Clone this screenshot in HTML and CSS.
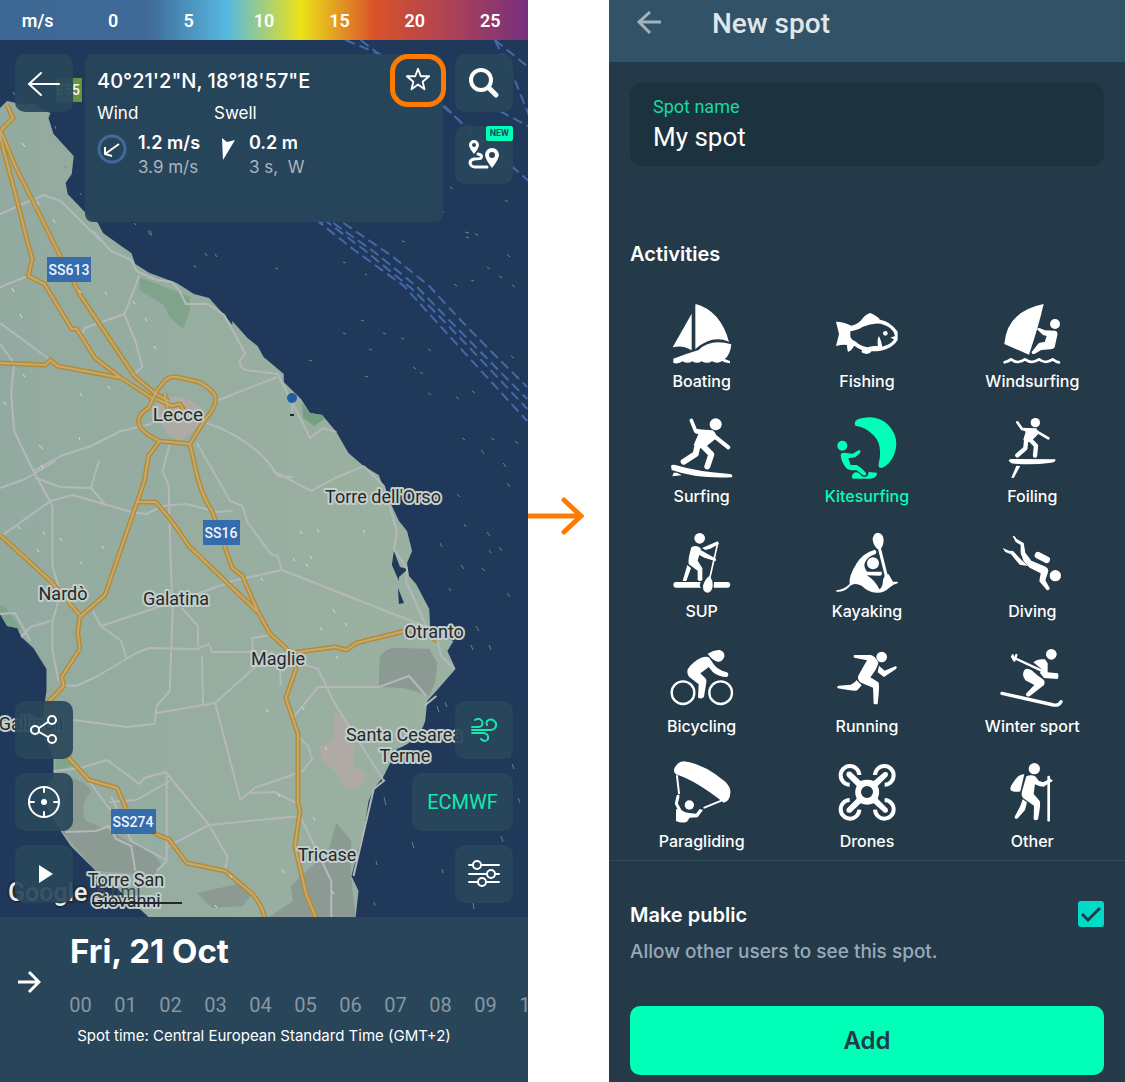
FILE: index.html
```
<!DOCTYPE html>
<html lang="en">
<head>
  <meta charset="UTF-8" />
  <title>New spot</title>
  <meta name="viewport" content="width=device-width, initial-scale=1.0" />
  <link rel="stylesheet" href="styles.css">
</head>
<body>
  <main class="page">

    <!-- Map screen -->
    <section class="screen map-screen">
      <div class="scale">
        <span>m/s</span><span>0</span><span>5</span><span>10</span><span>15</span><span>20</span><span>25</span>
      </div>

      <div class="map">
        <svg class="map-canvas" viewBox="0 40 528 877" preserveAspectRatio="xMidYMid slice" role="img" aria-label="Map of Salento">
          <defs>
            <linearGradient id="landFill" x1="0" x2="1">
              <stop offset="0" stop-color="#93aaa0" />
              <stop offset="1" stop-color="#9bb1a1" />
            </linearGradient>
            <path id="majorRoads" d="M7 104L13 117L2 128L0 135L17 200L27 240L32 258L28 275L44 283L71 328L76 328L94 357L120 377L152 398M2 133L15 165L40 215L57 250L80 295L133 375L153 392L167 400M0 362L45 364L50 359L57 365L120 377M163 380Q168 375 175 376L197 381Q210 388 213 395Q216 404 202 420L188 443L158 440Q138 431 137 420Q138 412 147 407L155 390ZM158 440L147 455L143 480L104 594L79 616L77 632L79 648L61 676L63 685L47 702Q40 725 68 757L88 779L116 787L125 808Q138 828 167 838L185 862L223 870L250 893Q260 905 262 917M188 443L193 465Q198 492 210 510L230 567L240 575L255 610L267 632L288 652L293 668L283 697L295 733L295 803L297 810L292 845L303 893L313 917M137 501H154Q165 512 187 545L255 611M288 652L332 646L343 649L353 642L405 629L420 632L433 640M0 534L50 580L79 614M155 398L170 405L178 403L184 412M163 392L166 408" />
          </defs>

          <rect x="0" y="40" width="528" height="877" fill="#20385a" />

          <g transform="translate(0 1) scale(1.01 1)">
            <!-- ferry lines -->
            <path class="ferry" d="M84 90Q190 110 310 218M90 100Q220 150 320 222M342 39L378 54M357 39L410 80L528 184M490 39L528 70M490 39L510 80L528 125M440 105L470 135M495 110L528 128M312 218L352 250L400 285Q440 330 522 420M320 218L362 250L408 288Q450 330 522 408M330 222L372 252L412 285Q450 325 522 398M340 222L388 255L425 285Q460 325 522 386" />

            <!-- land -->
            <path fill="url(#landFill)" d="M0 107L7 100L25 104L33 102L40 108L50 112L48 117L53 133L73 155L71 173L65 182L67 193L83 210L97 222L102 232L120 245L130 252L134 263L148 272L175 282L192 293L207 297L222 314L230 324V320L245 337L255 345L261 356L281 373V381L298 398L307 412L319 414L333 431L345 452L360 465L375 474L381 490L395 520L403 530L408 550L403 562L405 575L412 583L425 608L426 630L449 640L443 650L451 668L432 690L423 700L421 720Q415 740 393 748L380 775L370 788L365 800L360 830L348 875L355 890L352 917H148L130 900L95 870L70 845L60 830L40 795L53 775V757L40 730L46 690V668L33 647L21 636L17 627L7 625L0 613Z" />
            <path fill="#20385a" d="M390 550L396 566L404 568L395 576V580L388 564ZM394 587L400 602L395 603ZM90 890L125 895L122 905Z" />
            <g fill="#7fa48b">
              <path d="M138 276L188 296V310L181 328L168 316L162 304L138 289Z" />
              <path d="M299 402L307 412L319 414L321 418L311 425L300 417Z" fill="#74a081" />
              <path d="M0 604L6 607L17 622L21 630L17 627L7 625L0 613Z" />
              <path d="M55 758L67 757L72 764L55 770Z" />
            </g>
            <g fill="#8b9a93">
              <path d="M376 655Q384 645 397 647L425 648L433 662L431 680L425 695L410 690L400 687L375 686Z" />
              <path d="M68 776Q85 780 90 790Q78 805 85 820L110 830L130 842L150 850L160 864L152 874L95 870L62 831Z" />
              <path d="M195 892L240 882L250 892L240 905L210 907ZM310 864L325 850L333 822L348 840L347 870L352 917H265L290 900L288 885Z" />
            </g>
            <path fill="#b0aaa7" d="M330 711L341 716L347 740L351 745L350 765L363 775L357 788L340 785L335 773L320 762L315 745L330 740ZM155 400Q175 390 195 403L205 415L190 432L178 440L165 432L155 415Z" />

            <path class="road" d="M92 230L110 250L130 259L135 270L155 279L170 281L178 290L184 303H206L222 314L243 353Q232 362 243 369L275 373L307 437L320 427L333 431M138 275L123 313L134 340L141 366L130 375M123 313L84 327L80 335M0 213L43 194L60 200L100 240M0 287L5 284L28 275M0 322L50 359M0 343L14 362L11 392L14 430L33 470M214 400L274 376M205 422Q255 440 275 475L290 476M33 470L60 455L90 445L120 430L150 423M195 442L228 500L240 505L245 521L268 553L275 555L279 569L425 627M279 569L230 580L190 595M190 595L100 625L92 610M168 443L161 470L167 485L169 560L171 610L168 690L155 705L153 723L126 726L73 719M33 470L52 505V565L60 592L52 620V650L58 680M0 487L25 478L55 460M35 477L60 486L90 487L98 460M90 487L103 502M0 536L50 500L72 494L130 511L145 513L160 505L185 503L215 511L230 510M21 636L30 626L50 620M0 613L15 612L30 640M92 610L100 625L120 640L125 657M60 684L75 685L95 676L135 652L147 647L195 648L207 643L210 651L250 651V637L268 634M180 607L196 625V645M200 655L201 705M270 650L213 702L155 712M213 702L238 799L252 787L300 770L309 758L305 745L295 735M238 799L246 792L272 791L295 803M277 660L278 685M300 663L315 668L330 700L380 780M290 717L315 686L375 686L405 675L422 695M433 640L437 655L450 668M360 465L380 485L393 530L390 548L403 568L402 580L422 625M53 770L80 767L106 759L138 783L143 777L164 771L207 824L225 855L223 870M108 801L135 799L168 780M207 824L297 815L328 880V917M65 831L95 830L108 825L115 838L130 845L134 870M167 845L207 824M165 775V860L155 870M110 795L130 840L166 860M432 695L420 705M381 779L370 788L350 875M88 780L110 810M270 470L280 475L308 490L330 478L360 465" />

            <use href="#majorRoads" class="road-edge" />
            <use href="#majorRoads" class="road-core" />
          </g>

          <!-- wind particles -->
          <path class="particle" d="M22 143l3 4M37 201l2 4M53 219l2 4M79 290l2 3M12 288l2 4M20 314l2 4M105 292l2 3M133 301l2 3M145 318l2 3M154 346l2 3M23 374l2 3M108 386l2 3M80 393l2 3M4 402l2 3M39 445l4 4M79 437l1 3M41 465l2 3M18 526l2 3M43 532l2 3M60 538l2 3M37 549l2 3M80 562l2 2M102 546l2 3M300 531l2 3M317 529l2 3M363 530l2 3M293 558l2 3M306 564l2 3M261 578l2 3M333 609l2 4M345 623l2 3M320 627l2 3M336 656l2 3M310 556l2 3M266 709l2 3M302 707l2 3M325 747l2 3M278 794l2 3M313 817l2 3M282 869l2 4M230 875l2 3M332 891l2 3M215 905l2 3" />
          <path class="particle sea" d="M150 230l2 6M194 265l2 3M205 253l2 3M215 254l2 3M275 268l3 1M343 262l3 1M365 274l2 1M402 241l3 1M466 237l3 1M475 234l3 1M507 254l3 3M487 267l3 2M499 276l3 2M512 285l3 2M454 284l3 2M471 280l3 1M361 320l3 1M343 333l3 1M383 333l3 1M401 338l3 1M428 349l3 2M369 349l3 1M413 367l3 2M420 372l3 2M365 376l3 1M309 360l3 1M511 356l3 2M428 393l3 2M456 397l3 2M472 391l3 2M462 438l3 2M481 450l3 4M491 438l3 2M515 441l3 3M503 463l3 4M507 483l3 4M457 494l3 3M464 524l2 3M487 532l3 4M489 550l2 3M499 547l3 4M440 543l2 4M461 565l3 4M482 568l3 3M507 593l3 4M449 588l2 3M476 626l3 5M471 645l2 5M489 645l2 5M437 706l2 6M445 702l2 5M508 752l2 5M512 764l2 5M384 797l2 8M518 798l2 5M501 836l2 6M412 842l2 6M376 861l1 4M442 869l1 4M374 902l1 4M473 903l1 6M440 211l4 1M465 232l4 1M505 200l3 2M450 187l3 2M13 92l2 3M65 166l1 2M80 193l1 2M55 126l1 3M134 223l2 2M148 231l2 4" />

          <!-- pin -->
          <path stroke="#aab4ba" stroke-width="2" d="M292 404V413" />
          <circle cx="292" cy="398" r="5" fill="#1f5f9f" />
          <path stroke="#1c2a33" stroke-width="2" d="M290 415H294" />

          <!-- road shields -->
          <g class="shield">
            <rect x="56" y="78" width="26" height="24" fill="#67943c" />
            <rect x="47" y="257" width="44" height="25" />
            <rect x="203" y="520" width="37" height="25" />
            <rect x="111" y="809" width="45" height="25" />
            <text x="68" y="95">E55</text>
            <text x="69" y="275">SS613</text>
            <text x="221" y="538">SS16</text>
            <text x="133" y="827">SS274</text>
          </g>

          <g class="place">
            <text class="city" x="178" y="421">Lecce</text>
            <text x="383" y="503">Torre dell'Orso</text>
            <text x="63" y="600">Nardò</text>
            <text x="176" y="605">Galatina</text>
            <text x="434" y="638">Otranto</text>
            <text x="278" y="665">Maglie</text>
            <text x="31" y="730">Gallipoli</text>
            <text x="404" y="741">Santa Cesarea</text>
            <text x="405" y="762">Terme</text>
            <text x="327" y="861">Tricase</text>
            <text x="126" y="886">Torre San</text>
            <text x="126" y="907">Giovanni</text>
          </g>
          <text class="google" x="8" y="901">Google</text>
          <text class="distance" x="96" y="898">5 nmi</text>
          <path stroke="#22282c" stroke-width="2" d="M92 903H182" />
        </svg>

        <div class="overlay">
          <div class="side">
            <button type="button" class="map-button" aria-label="Back">
              <svg viewBox="0 0 58 58"><path d="M44 30H14M26 19L14 30L26 41" /></svg>
            </button>
            <div class="group">
              <button type="button" class="map-button" aria-label="Share">
                <svg viewBox="0 0 58 58"><circle cx="20" cy="29" r="4" /><circle cx="37" cy="19" r="4" /><circle cx="37" cy="38" r="4" /><path d="M24 27L33 21M24 31L33 36" /></svg>
              </button>
              <button type="button" class="map-button" aria-label="My location">
                <svg viewBox="0 0 58 58"><circle cx="29" cy="29" r="15" /><circle class="solid" cx="29" cy="29" r="3" /><path d="M29 14V19M29 39V44M14 29H19M39 29H44" /></svg>
              </button>
              <button type="button" class="map-button" aria-label="Play">
                <svg viewBox="0 0 58 58"><path class="solid" d="M24 20L38 29L24 38Z" /></svg>
              </button>
            </div>
          </div>

          <article class="info">
            <div class="info-top">
              <h2>40°21'2"N, 18°18'57"E</h2>
              <button type="button" class="star" aria-label="Add to favourites">
                <svg viewBox="0 0 28 28"><path d="M14 3L17 11L26 11L19 17L21 25L14 20L7 25L9 17L2 11L11 11Z" /></svg>
              </button>
            </div>
            <div class="readings">
              <div class="reading">
                <h3>Wind</h3>
                <div class="values">
                  <svg class="wind-dir" viewBox="0 0 30 30"><circle cx="15" cy="15" r="13" /><path d="M22 10L8 20M8 13L8 20L15 22" /></svg>
                  <p><strong>1.2 m/s</strong><span>3.9 m/s</span></p>
                </div>
              </div>
              <div class="reading">
                <h3>Swell</h3>
                <div class="values">
                  <svg class="swell-dir" viewBox="0 0 24 30"><path d="M8 4L13 8L21 6L9 26Z" /></svg>
                  <p><strong>0.2 m</strong><span>3 s,&nbsp; W</span></p>
                </div>
              </div>
            </div>
          </article>

          <div class="side side-right">
            <div class="group">
              <button type="button" class="map-button" aria-label="Search">
                <svg viewBox="0 0 58 58"><circle cx="26" cy="26" r="10" stroke-width="4" /><path stroke-width="5" d="M34 34L41 41" /></svg>
              </button>
              <button type="button" class="map-button" aria-label="Route">
                <svg viewBox="0 0 58 58">
                  <path class="solid" fill-rule="evenodd" d="M19 14A5 5 0 0 1 24 19Q24 22 19 28Q14 22 14 19A5 5 0 0 1 19 14ZM19 17A2 2 0 0 0 19 21A2 2 0 0 0 19 17ZM37 22A7 7 0 0 1 44 29Q44 33 37 42Q30 33 30 29A7 7 0 0 1 37 22ZM37 26A3 3 0 0 0 37 32A3 3 0 0 0 37 26Z" />
                  <path stroke-width="3" d="M23 28Q28 29 26 32Q25 33 19 33Q15 34 15 37Q16 41 20 41H32" />
                </svg>
                <span class="badge">NEW</span>
              </button>
            </div>
            <div class="group">
              <button type="button" class="map-button green" aria-label="Wind layer">
                <svg viewBox="0 0 58 58"><path d="M17 26H24Q29 25 27 20Q24 16 20 19M17 29H36Q42 28 41 22Q37 16 32 20Q31 22 32 24M17 32H29Q34 33 33 38Q30 42 26 38" /></svg>
              </button>
              <button type="button" class="map-button model">ECMWF</button>
              <button type="button" class="map-button" aria-label="Settings">
                <svg viewBox="0 0 58 58"><path d="M14 20H18M26 20H44M14 29H32M40 29H44M14 37H23M31 37H44" /><circle cx="22" cy="20" r="4" /><circle cx="36" cy="29" r="4" /><circle cx="27" cy="37" r="4" /></svg>
              </button>
            </div>
          </div>
        </div>
      </div>

      <div class="timeline">
        <button type="button" class="next" aria-label="Next">
          <svg viewBox="0 0 24 24"><path d="M1 12H22M12 2L22 12L12 22" /></svg>
        </button>
        <div class="days">
          <h1>Fri, 21 Oct</h1>
          <ol class="hours">
            <li>00</li><li>01</li><li>02</li><li>03</li><li>04</li><li>05</li><li>06</li><li>07</li><li>08</li><li>09</li><li>10</li>
          </ol>
        </div>
        <p class="timezone">Spot time: Central European Standard Time (GMT+2)</p>
      </div>
    </section>

    <div class="step">
      <svg viewBox="0 0 56 38"><path d="M0 19H53M36 3L53 19L36 35" /></svg>
    </div>

    <!-- New spot form -->
    <form class="screen form-screen">
      <header class="form-header">
        <button type="button" class="back" aria-label="Back">
          <svg viewBox="0 0 24 24"><path d="M24 11H2M13 1L2 11L13 22" /></svg>
        </button>
        <h1>New spot</h1>
      </header>

      <div class="field">
        <label for="spotName">Spot name</label>
        <input type="text" id="spotName" value="My spot">
      </div>

      <h2 class="activities-title">Activities</h2>
      <div class="activities">
        <button type="button" class="activity">
          <svg viewBox="119 33 192 192"><path d="M184 71V181Q158 164 127 172ZM196 42Q270 62 296 155Q245 133 195 177V46ZM303 163Q300 195 283 207L299 213V220Q284 219 275 213Q262 223 245 214Q230 223 214 214Q200 223 186 214Q172 223 157 214Q145 223 129 219V206Q165 192 205 180Q240 145 303 163Z" /></svg>
          Boating
        </button>
        <button type="button" class="activity">
          <svg viewBox="615 33 192 192"><path fill-rule="evenodd" d="M618 95Q640 95 664 107Q685 103 697 86Q708 72 721 69Q742 78 750 89Q780 93 803 125V150Q780 185 725 184Q720 192 710 192Q688 189 697 181Q682 174 673 167Q666 180 654 186Q650 175 651 165Q640 162 618 168L627 132ZM661 124Q685 120 697 111Q725 98 752 101Q790 110 795 138L781 143L792 148Q783 164 757 170Q755 155 747 138Q740 150 744 167Q725 167 712 172Q685 165 678 155Q665 150 661 140Z" /><circle cx="766" cy="130" r="7" /></svg>
          Fishing
        </button>
        <button type="button" class="activity">
          <svg viewBox="1111 33 192 192"><path d="M1242 42Q1226 112 1198 194L1124 162Q1132 64 1242 42ZM1227 113L1246 121L1277 122Q1285 124 1283 135L1275 172Q1272 178 1262 178L1235 180L1214 192Q1205 193 1206 186L1225 162Q1228 158 1245 156L1251 138L1240 135L1222 118Z" /><circle cx="1276" cy="102" r="15" /><path class="line" stroke-width="8" d="M1125 217Q1136 214 1144 208Q1155 216 1165 216Q1177 214 1186 208Q1198 216 1207 216Q1219 214 1228 208Q1238 216 1248 216Q1260 214 1269 208Q1280 216 1288 217" /></svg>
          Windsurfing
        </button>
        <button type="button" class="activity">
          <svg viewBox="119 33 192 192"><circle cx="256" cy="58" r="18" /><path d="M190 72L247 76Q260 86 258 100L230 122L205 132L190 120L204 88L193 84ZM122 183Q125 177 135 180Q200 200 300 207Q310 211 304 217Q200 222 124 195ZM130 203H140L154 211L126 214Z" /><path class="line" stroke-width="11" d="M183 46L195 76L215 82" /><path class="line" stroke-width="12" d="M250 92L294 127" /><path class="line" stroke-width="18" d="M203 115L196 147L160 170M212 117L243 148L231 184" /></svg>
          Surfing
        </button>
        <button type="button" class="activity" aria-pressed="true">
          <svg viewBox="615 33 192 192"><path d="M676 62Q670 50 685 42Q740 25 775 60Q812 100 792 150Q780 178 757 188Q744 191 746 176Q760 120 730 90Q705 65 676 62ZM632 150Q632 144 642 143L668 146L687 135Q694 136 690 144L676 157L655 160L662 180L680 180Q700 192 708 205Q710 213 700 211L680 196Q655 197 648 188Q634 172 632 150ZM672 203Q685 198 695 213Q707 220 714 211L716 201L740 203Q743 205 738 214Q732 222 715 221L668 221Q662 212 672 203Z" /><circle cx="637" cy="122" r="15" /></svg>
          Kitesurfing
        </button>
        <button type="button" class="activity">
          <svg viewBox="1111 33 192 192"><circle cx="1217" cy="53" r="14" /><path d="M1172 68L1220 70L1228 85L1208 105L1190 115L1181 104L1188 80ZM1137 167Q1137 162 1145 162L1277 163Q1279 170 1265 173Q1200 182 1145 175ZM1160 182L1172 183L1152 219L1145 218Z" /><path class="line" stroke-width="8" d="M1163 52L1177 72L1190 75M1222 80L1256 100" /><path class="line" stroke-width="13" d="M1190 100L1187 130L1163 151M1200 103L1219 122L1216 152" /></svg>
          Foiling
        </button>
        <button type="button" class="activity">
          <svg viewBox="119 33 192 192"><circle cx="208" cy="55" r="16" /><path d="M183 82Q200 72 212 86L202 122L216 145V180Q209 186 202 180V152L175 132Q172 120 183 82ZM171 135L182 144L168 183H157ZM215 84L262 64L266 72L240 86L225 90ZM207 88L257 116L256 124L222 113L202 102ZM136 186H211Q205 200 213 203H136Q129 202 129 194Q129 187 136 186ZM251 186H293Q300 187 300 194Q299 202 293 203H250Z" /><path d="M237 168Q248 180 247 198Q244 218 231 218Q217 216 218 198Q223 178 237 168Z" /><path class="line" stroke-width="5" d="M262 70L237 180" /></svg>
          SUP
        </button>
        <button type="button" class="activity">
          <svg viewBox="615 33 192 192"><path d="M744 38Q760 40 761 60Q760 80 750 88H743Q729 75 728 58Q730 39 744 38Z" /><circle cx="729" cy="130" r="18" /><path class="line" stroke-width="9" d="M747 80L770 172" /><path d="M759 180L766 163H776L789 185L803 185V190Q790 192 778 203Q760 220 740 218Q715 217 695 197Q670 185 655 203Q640 217 619 215V211Q640 210 659 192Q655 170 680 130Q700 98 735 89Q743 97 735 103Q711 110 704 130Q700 143 712 155H755Q758 165 750 167L710 166Q735 180 748 208Q758 205 759 180Z" /></svg>
          Kayaking
        </button>
        <button type="button" class="activity">
          <svg viewBox="1111 33 192 192"><circle cx="1277" cy="167" r="17" /><path d="M1149 48Q1154 44 1160 56L1182 69L1187 98L1205 122L1248 140Q1260 146 1254 160L1247 181L1260 204Q1260 212 1252 211L1229 184L1233 160L1200 143L1182 124L1173 100V75L1158 66ZM1119 84L1138 92L1150 93L1172 116L1194 138L1170 134L1144 103L1127 96Z" /><path class="line" stroke-width="20" d="M1225 106L1251 119" /></svg>
          Diving
        </button>
        <button type="button" class="activity">
          <svg viewBox="119 33 192 192"><circle class="line" stroke-width="7" cx="158" cy="173" r="34" /><circle class="line" stroke-width="7" cx="271" cy="173" r="34" /><path d="M171 108Q172 95 200 75Q225 60 237 68L250 88Q262 105 290 112Q298 118 290 126Q265 126 248 112L235 96Q220 108 210 115L225 130Q230 135 228 142L221 185Q215 194 203 188L205 148L176 125Q170 118 171 108ZM232 56Q250 44 268 45Q284 50 282 65Q275 82 262 80Q245 75 232 56Z" /></svg>
          Bicycling
        </button>
        <button type="button" class="activity">
          <svg viewBox="615 33 192 192"><circle cx="755" cy="66" r="16" /><path d="M672 60L722 60Q735 63 745 82Q744 98 721 127L745 142Q750 147 743 206Q737 210 731 206L729 158L690 142Q680 130 686 120L711 76L673 68Q669 63 672 60ZM679 135L695 151L682 166Q676 170 623 160Q619 154 626 152L663 149L676 140ZM747 92L764 107L798 93Q803 98 798 102L762 126L743 112Z" /></svg>
          Running
        </button>
        <button type="button" class="activity">
          <svg viewBox="1111 33 192 192"><circle cx="1265" cy="58" r="16" /><path d="M1211 82Q1225 70 1246 73L1254 85V112L1284 115Q1289 120 1284 132L1243 129L1231 114L1236 103ZM1186 103Q1194 98 1206 106L1222 120L1240 133Q1248 140 1243 150L1200 184Q1188 186 1189 176L1214 150L1187 136Q1174 118 1186 103Z" /><path class="line" stroke-width="7" d="M1147 66L1234 106M1160 60L1154 77M1149 61L1151 72" /><path class="line" stroke-width="10" d="M1117 175L1272 210Q1287 213 1294 200" /></svg>
          Winter sport
        </button>
        <button type="button" class="activity">
          <svg viewBox="119 33 192 192"><circle cx="177" cy="165" r="14" /><path d="M160 34Q215 38 285 95Q302 112 300 130Q298 155 280 158Q200 95 145 76Q130 72 131 58Q140 35 160 34ZM137 178L150 177Q160 188 176 189L197 191L208 177L218 180L202 202L178 203L170 215Q155 221 137 213Z" /><path class="line" stroke-width="6" d="M140 78L146 130M275 151L222 173" /><path class="line" stroke-width="9" d="M143 139L138 161L148 180" /></svg>
          Paragliding
        </button>
        <button type="button" class="activity">
          <svg viewBox="615 33 192 192"><path fill-rule="evenodd" d="M650 78Q646 63 662 65L692 93Q711 86 731 93L763 66Q777 64 773 78L743 108Q752 126 743 146L773 176Q777 190 763 188L731 160Q711 168 692 160L662 188Q646 190 650 176L680 146Q671 126 680 108ZM711 108A18 18 0 0 0 711 144A18 18 0 0 0 711 108Z" /><path class="line butt" stroke-width="12" d="M688 75A28 28 0 1 0 659 104M735 75A28 28 0 1 1 764 104M688 179A28 28 0 1 1 659 150M735 179A28 28 0 1 0 764 150" /></svg>
          Drones
        </button>
        <button type="button" class="activity">
          <svg viewBox="1111 33 192 192"><circle cx="1214" cy="56" r="17" /><path d="M1184 73Q1165 73 1150 98Q1137 115 1145 122Q1160 128 1172 124ZM1190 79Q1206 72 1218 80L1227 92L1240 97L1262 86L1270 92L1242 110Q1228 110 1216 103L1212 132L1230 153Q1234 162 1225 208Q1218 214 1212 208L1213 167L1180 144Q1173 138 1178 120ZM1179 148L1192 157L1186 180L1163 206Q1154 208 1155 200L1172 168Z" /><path class="line" stroke-width="8" d="M1257 81V211" /></svg>
          Other
        </button>
      </div>

      <div class="form-footer">
        <div class="public">
          <div>
            <label for="makePublic">Make public</label>
            <p>Allow other users to see this spot.</p>
          </div>
          <div class="checkbox">
            <input type="checkbox" id="makePublic" checked>
            <svg viewBox="0 0 26 26"><path d="M4 13L10 19L22 7" /></svg>
          </div>
        </div>
        <button type="submit" class="add">Add</button>
      </div>
    </form>
  </main>

  <script>
    document.querySelectorAll(".activity").forEach(button => {
      button.addEventListener("click", () => {
        const pressed = button.getAttribute("aria-pressed") === "true";
        button.setAttribute("aria-pressed", String(!pressed));
      });
    });

    document.querySelector(".form-screen").addEventListener("submit", e => e.preventDefault());
  </script>
</body>
</html>
```
FILE: styles.css
```
:root {
  --accent: #00ffb7;
  --panel: #28455a;
  --form: #253a49;
  --orange: #ff7a00;
  --font: Inter, "Liberation Sans", sans-serif;
  --font-ui: Roboto, "Liberation Sans", sans-serif;
}

* {
  box-sizing: border-box;
}

body {
  margin: 0;
  background: #fff;
  color: #fff;
  font-family: var(--font);
}

h1, h2, h3, p, ol {
  margin: 0;
  padding: 0;
}

button {
  padding: 0;
  border: none;
  background: none;
  color: inherit;
  font-family: inherit;
  cursor: pointer;
}

svg {
  display: block;
}

.page {
  display: grid;
  grid-template-columns: 528fr 81fr 516fr;
  min-height: 100vh;
}

.screen {
  display: flex;
  flex-direction: column;
  min-width: 0;
}

/* wind scale */
.scale {
  display: grid;
  grid-template-columns: repeat(7, 1fr);
  align-items: center;
  height: 40px;
  background: linear-gradient(90deg, #3e6894 0%, #3f6a97 28%, #56b9e1 43%, #ece31a 57%, #d9522a 71%, #b14352 84%, #77307e 100%);
  font: 600 18px var(--font-ui);
  text-align: center;
}

/* map */
.map {
  position: relative;
  flex: 1;
  overflow: hidden;
  background: #20385a;
}

.map-canvas {
  position: absolute;
  inset: 0;
  width: 100%;
  height: 100%;
}

.ferry {
  fill: none;
  stroke: #4269a8;
  stroke-width: 2;
  stroke-dasharray: 10 5;
}

.road {
  fill: none;
  stroke: #b5b8ba;
  stroke-width: 2;
  stroke-linejoin: round;
}

.road-edge {
  fill: none;
  stroke: #b38d35;
  stroke-width: 5;
  stroke-linejoin: round;
}

.road-core {
  fill: none;
  stroke: #c6a972;
  stroke-width: 2;
  stroke-linejoin: round;
}

.particle {
  stroke: #c8e4d2;
  stroke-width: 1;
}

.particle.sea {
  stroke: #66809b;
}

.shield {
  fill: #356cae;
  font: 500 14px var(--font-ui);
  text-anchor: middle;
}

.shield text {
  fill: #f0f4fa;
}

.place {
  fill: #24292c;
  font: 400 18px var(--font-ui);
  text-anchor: middle;
  stroke: #c3cecb;
  stroke-width: 4;
  stroke-linejoin: round;
  paint-order: stroke;
}

.place .city {
  font-size: 19px;
}

.google {
  fill: #e9edf0;
  font: 500 25px var(--font-ui);
  stroke: #1c2b38;
  stroke-width: 4;
  paint-order: stroke;
}

.distance {
  fill: #3c4a4f;
  font: 400 18px var(--font-ui);
}

.overlay {
  position: relative;
  display: grid;
  grid-template-columns: 58px 1fr 58px;
  gap: 12px;
  height: 100%;
  padding: 14px 15px;
}

.side {
  display: flex;
  flex-direction: column;
  justify-content: space-between;
}

.group {
  display: flex;
  flex-direction: column;
  gap: 14px;
}

.side-right .group {
  align-items: flex-end;
}

.map-button {
  position: relative;
  width: 58px;
  height: 58px;
  border-radius: 10px;
  background: rgba(40, 70, 91, 0.92);
}

.map-button svg {
  fill: none;
  stroke: currentColor;
  stroke-width: 2;
  stroke-linecap: round;
}

.map-button .solid {
  fill: currentColor;
  stroke: none;
}

.map-button.green {
  color: #16e8ae;
}

.map-button.model {
  width: 101px;
  color: #16e8ae;
  font: 400 20px var(--font-ui);
}

.badge {
  position: absolute;
  top: 0;
  right: 0;
  padding: 0 4px;
  border-radius: 2px;
  background: var(--accent);
  color: #25485a;
  font: 700 9px/15px var(--font-ui);
}

.info {
  align-self: start;
  min-height: 168px;
  padding-left: 12px;
  border-radius: 8px;
  background: rgba(40, 70, 91, 0.96);
}

.info-top {
  display: flex;
  justify-content: space-between;
  height: 48px;
}

.info-top h2 {
  font-size: 20px;
  font-weight: 500;
  line-height: 54px;
}

.star {
  display: grid;
  place-items: center;
  width: 56px;
  height: 53px;
  margin-right: -3px;
  padding-bottom: 4px;
  border: 5px solid var(--orange);
  border-radius: 18px;
}

.star svg {
  width: 26px;
  height: 26px;
  fill: none;
  stroke: #fff;
  stroke-width: 2;
  stroke-linejoin: round;
}

.readings {
  display: flex;
}

.reading {
  width: 117px;
}

.reading h3 {
  font-size: 17px;
  font-weight: 400;
  line-height: 22px;
}

.values {
  display: flex;
  margin-top: 6px;
}

.values svg {
  flex: none;
  height: 30px;
  margin-top: 4px;
}

.wind-dir {
  width: 30px;
  margin-right: 11px;
  fill: none;
  stroke: #fff;
  stroke-width: 2;
}

.wind-dir circle {
  stroke: #41699a;
  stroke-width: 3;
}

.swell-dir {
  width: 24px;
  margin-right: 11px;
  fill: #fff;
}

.values p {
  white-space: nowrap;
}

.values strong,
.values span {
  display: block;
  font-size: 18px;
  line-height: 25px;
}

.values strong {
  font-weight: 600;
}

.values span {
  color: #a9b5bd;
  font-size: 17px;
}

/* timeline */
.timeline {
  display: grid;
  grid-template-columns: 58px 1fr;
  height: 165px;
  padding-bottom: 36px;
  background: var(--panel);
}

.next {
  grid-area: 1 / 1 / 3 / 2;
  align-self: center;
  justify-self: center;
}

.next svg {
  width: 24px;
  height: 24px;
  fill: none;
  stroke: #fff;
  stroke-width: 3;
}

.days {
  grid-area: 1 / 2;
  overflow: hidden;
}

.days h1 {
  padding-left: 12px;
  font-size: 33px;
  font-weight: 700;
  line-height: 68px;
}

.hours {
  display: flex;
  padding-top: 8px;
  list-style: none;
  color: #8797a3;
  font: 400 20px/24px var(--font-ui);
  text-align: center;
}

.hours li {
  flex: 0 0 45px;
}

.timezone {
  grid-area: 2 / 1 / 3 / 3;
  align-self: end;
  font-size: 15px;
  line-height: 20px;
  text-align: center;
}

/* arrow between the screens */
.step {
  display: flex;
  align-items: center;
  padding-bottom: 50px;
}

.step svg {
  width: 56px;
  fill: none;
  stroke: var(--orange);
  stroke-width: 5;
  stroke-linecap: round;
}

/* form */
.form-screen {
  background: var(--form);
}

.form-header {
  display: flex;
  align-items: center;
  gap: 51px;
  height: 62px;
  padding: 0 28px 16px;
  background: #315267;
  color: #e1e6ea;
}

.form-header h1 {
  font: 500 28px var(--font-ui);
}

.back svg {
  width: 24px;
  height: 24px;
  fill: none;
  stroke: #a3b3be;
  stroke-width: 3;
}

.field {
  margin: 21px 21px 0;
  padding: 12px 23px;
  border-radius: 12px;
  background: #1d323f;
}

.field label {
  display: block;
  color: #11dca3;
  font: 400 18px/24px var(--font-ui);
}

.field input {
  display: block;
  width: 100%;
  height: 35px;
  padding: 0;
  border: none;
  outline: none;
  background: none;
  color: #fff;
  font: 400 26px var(--font-ui);
}

.activities-title {
  margin: 76px 21px 35px;
  font-size: 20px;
  font-weight: 600;
  line-height: 24px;
}

.activities {
  display: grid;
  grid-template-columns: repeat(3, 1fr);
  row-gap: 25px;
  padding: 0 10px 9px;
}

.activity {
  display: flex;
  flex-direction: column;
  align-items: center;
  gap: 6px;
  font-size: 16px;
  font-weight: 500;
  line-height: 20px;
}

.activity svg {
  width: 64px;
  height: 64px;
  fill: currentColor;
}

.activity .line {
  fill: none;
  stroke: currentColor;
  stroke-linecap: round;
  stroke-linejoin: round;
}

.activity .butt {
  stroke-linecap: butt;
}

.activity[aria-pressed="true"] {
  color: var(--accent);
}

.form-footer {
  flex: 1;
  padding: 40px 21px 7px;
  border-top: 1px solid #344b5b;
}

.public {
  display: flex;
  justify-content: space-between;
  align-items: flex-start;
}

.public label {
  font-size: 20px;
  font-weight: 600;
  line-height: 28px;
}

.public p {
  margin-top: 10px;
  color: #98a9bb;
  font-size: 19px;
  font-weight: 500;
  line-height: 26px;
}

.checkbox {
  display: grid;
}

.checkbox input,
.checkbox svg {
  grid-area: 1 / 1;
  width: 26px;
  height: 26px;
  margin: 0;
}

.checkbox input {
  appearance: none;
  border: 2px solid #00dbc8;
  border-radius: 3px;
  cursor: pointer;
}

.checkbox input:checked {
  background: #00dbc8;
}

.checkbox svg {
  fill: none;
  stroke: var(--form);
  stroke-width: 3;
  pointer-events: none;
}

.add {
  width: 100%;
  height: 69px;
  margin-top: 41px;
  border-radius: 10px;
  background: var(--accent);
  color: #1f3a48;
  font-size: 24px;
  font-weight: 600;
}
```
